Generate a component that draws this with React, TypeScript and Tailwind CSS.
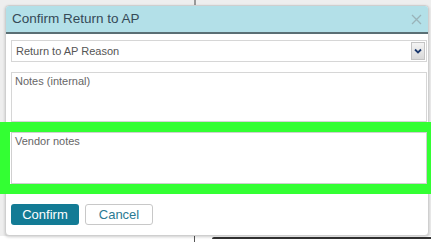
export default function App() {
  return (
    <div
      className="relative h-[242px] w-[431px] overflow-hidden bg-[#eeeeee]"
      style={{ fontFamily: '"Liberation Sans", Arial, sans-serif' }}
    >
      {/* background page decorations behind the modal */}
      <div className="absolute left-[194px] top-0 h-[6px] w-[2px] bg-[#9a9a9a]" />
      <div className="absolute left-0 top-[236px] h-[6px] w-[431px] bg-white" />
      <div className="absolute left-[194px] top-[236px] h-[6px] w-[1px] bg-[#555]" />
      <div className="absolute left-[212px] top-[237px] h-[2px] w-[219px] rounded-tl-[3px] border-l border-t-2 border-[#333]" />

      <div className="relative pl-[5px] pt-[5px]">
        <div className="flex h-[231px] w-[424px] flex-col rounded-[4px] border border-[#cfcfcf] bg-white shadow-[0_1px_3px_rgba(0,0,0,0.2)]">
          {/* header */}
          <div className="flex h-[28px] shrink-0 items-center justify-between rounded-t-[3px] border-b-2 border-[#5a6f74] bg-[#b3e0e8] pl-[6px] pr-[6px]">
            <span className="text-[13.5px] leading-none text-[#354a57]">Confirm Return to AP</span>
            <svg width="11" height="11" viewBox="0 0 11 11" className="mt-[1px]">
              <path d="M1 1 L10 10 M10 1 L1 10" stroke="#9ab3b9" strokeWidth="1.3" />
            </svg>
          </div>

          {/* body */}
          <div className="flex flex-col pl-[5px] pr-[1px] pt-[6px]">
            {/* select */}
            <div className="flex h-[22px] w-[416px] items-center justify-between border border-[#d6d6d6] bg-white pl-[4px] pr-[1px]">
              <span className="text-[11px] leading-[13px] text-[#555]">Return to AP Reason</span>
              <div className="flex h-[18px] w-[14px] items-center justify-center border border-[#c4c4c4] bg-gradient-to-b from-[#f4f4f4] to-[#d9d9d9]">
                <svg width="8" height="6" viewBox="0 0 8 6">
                  <path d="M1 1.5 L4 4.5 L7 1.5" stroke="#1d3a6e" strokeWidth="1.8" fill="none" />
                </svg>
              </div>
            </div>

            {/* notes internal */}
            <div className="mt-[10px] h-[50px] w-[416px] border border-[#d6d6d6] bg-white px-[3px] pt-[2px]">
              <span className="block text-[11px] leading-[13px] text-[#666]">Notes (internal)</span>
            </div>

            {/* highlighted vendor notes */}
            <div className="relative -ml-[11px] h-[72px] w-[435px] shrink-0 border-[10px] border-[#33ff33]">
              <div className="ml-px h-[52px] w-[416px] border border-[#cfcfcf] bg-white px-[3px] pt-[2px]">
                <span className="block text-[11px] leading-[13px] text-[#666]">Vendor notes</span>
              </div>
            </div>

            {/* buttons */}
            <div className="mt-[10px] flex gap-[6px]">
              <button className="flex h-[21px] w-[68px] items-center justify-center rounded-[3px] bg-[#137b95] text-[13px] text-white">
                Confirm
              </button>
              <button className="flex h-[21px] w-[68px] items-center justify-center rounded-[3px] border border-[#c8c8c8] bg-white text-[13px] text-[#2b7a93]">
                Cancel
              </button>
            </div>
          </div>
        </div>
      </div>
    </div>
  );
}
